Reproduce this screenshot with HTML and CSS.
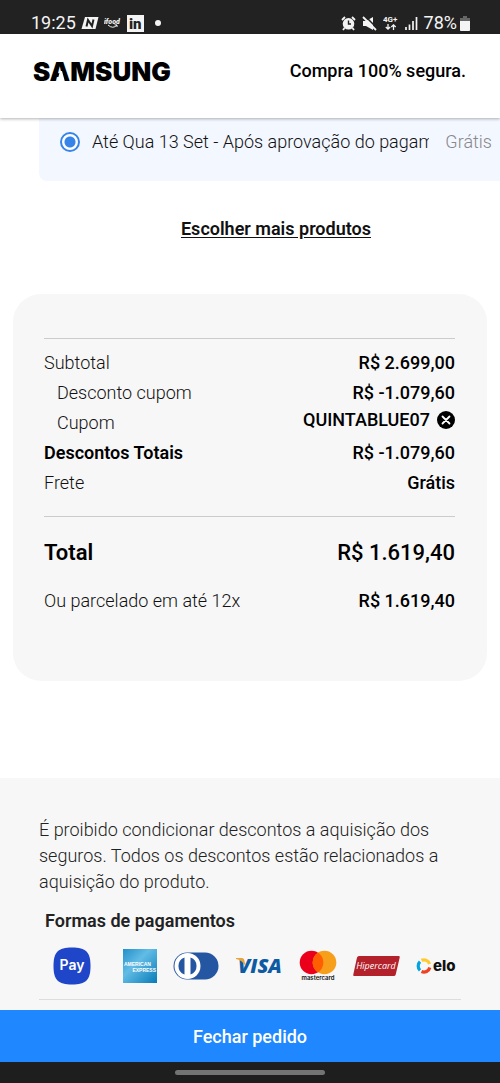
FILE: index.html
```html
<!DOCTYPE html>
<html lang="pt-BR">
<head>
<meta charset="utf-8">
<meta name="viewport" content="width=device-width, initial-scale=1">
<title>Samsung - Compra segura</title>
<link rel="stylesheet" href="styles.css">
</head>
<body>
<div class="status">
  <div class="status-group">
    <span class="clock">19:25</span>
    <svg width="18" height="14" viewBox="0 0 18 14" aria-hidden="true"><path d="M4 1h13.500l-3 12H.5z" fill="#f4f4f4"/><path d="M5.500 10.500 7 4l4 6 1.500-6.500" fill="none" stroke="#222" stroke-width="2"/></svg>
    <svg width="18" height="14" viewBox="0 0 18 14" aria-hidden="true"><text x="0" y="8" class="ifood">ifood</text><path d="M4 9q5 4.500 9 0M13 9l-2.500-.2M13 9v2" fill="none" stroke="#f4f4f4"/></svg>
    <svg width="17" height="17" viewBox="0 0 17 17" aria-hidden="true"><path d="M0 0h17v17H0z" fill="#f4f4f4"/><text x="2" y="14" class="linkedin">in</text></svg>
    <span class="dot"></span>
  </div>
  <div class="status-group status-right">
    <svg width="15" height="15" viewBox="0 0 15 15" aria-hidden="true"><path d="m1 4 3-3m10 3-3-3M3.500 12 2 14m9.500-2 1.500 2" stroke="#f4f4f4" stroke-width="1.800"/><circle cx="7.500" cy="7.800" r="5.800" fill="#f4f4f4"/><path d="M7.500 4.500V8H10" fill="none" stroke="#222" stroke-width="1.400"/></svg>
    <svg width="15" height="15" viewBox="0 0 15 15" aria-hidden="true"><path d="M1 5h3l7-4v13l-7-4H1z" fill="#f4f4f4"/><path d="m3 0 12 12" stroke="#222" stroke-width="1.500"/><path d="m1 1 13 13" stroke="#f4f4f4" stroke-width="1.800"/></svg>
    <svg width="16" height="16" viewBox="0 0 16 16" aria-hidden="true"><text x="0" y="7" class="network">4G+</text><path d="M5 9v5M2.800 12 5 14.200 7.200 12M10.500 15v-5M8.300 12l2.200-2.200 2.200 2.200" fill="none" stroke="#f4f4f4" stroke-width="1.300"/></svg>
    <svg width="13" height="13" viewBox="0 0 13 13" aria-hidden="true"><path d="M1 13v-3M4.500 13V7.500M8 13V4M11.500 13V0" stroke="#f4f4f4" stroke-width="1.700"/></svg>
    <span class="battery-level">78%</span>
    <svg width="10" height="15" viewBox="0 0 10 15" aria-hidden="true"><path d="M3 0h4v2h3v12q0 1-1 1H1q-1 0-1-1V2h3z" fill="#666"/><path d="M0 5h10v9q0 1-1 1H1q-1 0-1-1z" fill="#f4f4f4"/></svg>
  </div>
</div>

<header class="header">
  <svg class="brand" width="144" height="28" viewBox="0 0 144 28" role="img" aria-label="Samsung"><text x="0" y="24" class="brand-text">SAMSUNG</text><path d="M27 14h2l3 11h-8z" fill="#fff"/></svg>
  <span class="secure">Compra 100% segura.</span>
</header>

<main class="main">
  <label class="shipping">
    <input class="radio" type="radio" name="shipping" checked>
    <span class="shipping-name">Até Qua 13 Set - Após aprovação do pagamento</span>
    <span class="shipping-price">Grátis</span>
  </label>
  <a class="more" href="#produtos">Escolher mais produtos</a>

  <section class="summary">
    <dl class="rows">
      <div class="row"><dt>Subtotal</dt><dd>R$ 2.699,00</dd></div>
      <div class="row row-sub"><dt>Desconto cupom</dt><dd>R$ -1.079,60</dd></div>
      <div class="row row-sub"><dt>Cupom</dt><dd class="coupon">QUINTABLUE07
        <button class="remove" type="button" aria-label="Remover cupom"><svg width="18" height="18" viewBox="0 0 18 18" aria-hidden="true"><circle cx="9" cy="9" r="9"/><path d="m5.500 5.500 7 7m0-7-7 7" stroke="#fff" stroke-width="1.800" stroke-linecap="round"/></svg></button></dd></div>
      <div class="row row-strong"><dt>Descontos Totais</dt><dd>R$ -1.079,60</dd></div>
      <div class="row"><dt>Frete</dt><dd>Grátis</dd></div>
    </dl>
    <dl class="totals">
      <div class="row total"><dt>Total</dt><dd>R$ 1.619,40</dd></div>
      <div class="row"><dt>Ou parcelado em até 12x</dt><dd>R$ 1.619,40</dd></div>
    </dl>
  </section>
</main>

<footer class="footer">
  <p class="notice">É proibido condicionar descontos a aquisição dos seguros. Todos os descontos estão relacionados a aquisição do produto.</p>
  <h2 class="payments-title">Formas de pagamentos</h2>
  <div class="payments">
    <svg class="samsung-pay" width="38" height="38" viewBox="0 0 38 38" role="img" aria-label="Samsung Pay"><path d="M19 .5C33 .5 37.500 5 37.500 19S33 37.500 19 37.500.5 33 .5 19 5 .5 19 .5z" fill="#1f46c8"/><text x="19" y="23" text-anchor="middle" class="pay">Pay</text></svg>
    <svg width="34" height="34" viewBox="0 0 34 34" role="img" aria-label="American Express"><defs><linearGradient id="amex" x2="1" y2="1"><stop stop-color="#238fca"/><stop offset=".4" stop-color="#62bce5"/><stop offset="1" stop-color="#087bb8"/></linearGradient></defs><path d="M0 0h34v34H0z" fill="url(#amex)"/><text x="1" y="17" class="amex">AMERICAN</text><text x="33" y="23" text-anchor="end" class="amex">EXPRESS</text></svg>
    <svg width="46" height="28" viewBox="0 0 46 28" role="img" aria-label="Diners Club"><rect x=".5" y=".5" width="45" height="27" rx="13.500" fill="#2556a2"/><circle cx="14.500" cy="14" r="13" fill="#fff"/><path d="M11.500 5.500a9 9 0 0 0 0 17zM17.500 5.500a9 9 0 0 1 0 17z" fill="#2556a2"/></svg>
    <svg width="48" height="20" viewBox="0 0 48 20" role="img" aria-label="Visa"><text x="3" y="17" class="visa">VISA</text><path d="M1 2h6q2 0 2.500 3l1 5Q7 4 1 3z" fill="#e6a63c"/></svg>
    <svg width="38" height="32" viewBox="0 0 38 32" role="img" aria-label="Mastercard"><circle cx="12.500" cy="12.500" r="11.800" fill="#eb001b"/><circle cx="25.500" cy="12.500" r="11.800" fill="#f79e1b"/><path d="M19 2.600a11.800 11.800 0 0 1 0 19.800 11.800 11.800 0 0 1 0-19.800z" fill="#ff5f00"/><text x="19" y="30" text-anchor="middle" class="mastercard">mastercard</text></svg>
    <svg width="47" height="22" viewBox="0 0 47 22" role="img" aria-label="Hipercard"><path d="M6 1h40q1 0 .7 1.500l-4 17q-.3 1.500-2 1.500H1q-1 0-.7-1.500L4 2.500Q4.500 1 6 1z" fill="#b3212a"/><text x="23" y="14" text-anchor="middle" class="hiper">Hipercard</text></svg>
    <svg width="41" height="18" viewBox="0 0 41 18" role="img" aria-label="Elo"><g fill="none" stroke-width="3.200"><path d="M5.500 3.300A6 6 0 0 1 13.600 7" stroke="#fecb2f"/><path d="M4 13.300A6 6 0 0 1 4 4.700" stroke="#00a4e0"/><path d="M13.800 10.500a6 6 0 0 1-8.300 4" stroke="#ef4123"/></g><text x="17" y="14" class="elo">elo</text></svg>
  </div>
</footer>
<button class="checkout" type="button">Fechar pedido</button>
<div class="gesture"><span class="gesture-pill"></span></div>
</body>
</html>
```
FILE: styles.css
```css
* { box-sizing: border-box; }

body {
  margin: 0;
  min-height: 100vh;
  display: flex;
  flex-direction: column;
  background: #fff;
  color: #000;
  font: 400 18px/30px Roboto, "Noto Sans", sans-serif;
}

svg { display: block; flex: none; }
dl, dd, p, h2 { margin: 0; }

.status {
  display: flex;
  justify-content: space-between;
  padding: 12px 30px 0 31px;
  height: 34px;
  background: #222;
  color: #f4f4f4;
  font-size: 18px;
  line-height: 22px;
}
.status-group { display: flex; align-items: center; gap: 5px; }
.status-right { gap: 6px; }
.battery-level { margin-right: -3px; }
.dot { width: 6px; height: 6px; margin-left: 6px; border-radius: 50%; background: #f4f4f4; }
.ifood { font: italic 900 7px Roboto, sans-serif; fill: #f4f4f4; }
.linkedin { font: 900 15px Roboto, sans-serif; fill: #222; }
.network { font: 700 8px Roboto, sans-serif; fill: #f4f4f4; }

.header {
  position: relative;
  display: flex;
  align-items: center;
  justify-content: space-between;
  height: 84px;
  padding: 0 34px 10px 33px;
  background: #fff;
  box-shadow: 0 1px 3px rgba(0, 0, 0, .3);
}
.brand-text { font: 900 26px Inter, sans-serif; }
.secure { font-weight: 500; }

.main { display: flex; flex-direction: column; }
.shipping {
  display: flex;
  align-items: center;
  height: 63px;
  margin-left: 39px;
  padding: 0 8px 15px 21px;
  border-bottom-left-radius: 8px;
  background: #f3f7ff;
  color: #111;
  font-weight: 300;
}
.radio {
  appearance: none;
  flex: none;
  width: 20px;
  height: 20px;
  margin: 0 12px 0 0;
  border: 2px solid #3784e8;
  border-radius: 50%;
  background: radial-gradient(circle, #3784e8 5px, #fff 6px);
}
.shipping-name {
  flex: 1;
  min-width: 0;
  overflow: hidden;
  white-space: nowrap;
}
.shipping-price { margin-left: 16px; color: #888; }
.more {
  align-self: center;
  margin: 33px 0 0 52px;
  color: #111;
  font-weight: 600;
  text-underline-offset: 2px;
}

.summary {
  margin: 50px 13px 97px;
  padding: 44px 32px 65px 31px;
  border-radius: 28px;
  background: #f7f7f7;
}
.rows { padding: 9px 0 18px; border-top: 1px solid #ccc; }
.totals { border-top: 1px solid #ccc; padding-top: 21px; }
.row { display: flex; justify-content: space-between; font-weight: 500; }
.row dt { color: #111; font-weight: 300; }
.row-sub { padding-left: 13px; }
.coupon { display: flex; align-items: center; gap: 7px; padding-bottom: 6px; height: 30px; }
.remove { padding: 0; border: 0; background: none; }
.row-strong dt, .total dt { color: #000; font-weight: 600; }
.total { margin-bottom: 18px; font-size: 22px; }

.footer {
  flex: 1;
  padding: 39px 39px 9px;
  background: #f7f7f7;
  color: #222;
}
.notice { font-weight: 300; line-height: 26px; }
.payments-title { margin: 11px 6px; font-size: 18px; font-weight: 600; line-height: 30px; }
.payments {
  display: flex;
  align-items: center;
  gap: 16px;
  padding: 0 8px 14px 14px;
  border-bottom: 1px solid #ddd;
}
.samsung-pay { margin-right: 16px; }
.pay { font: 600 14px Inter, sans-serif; fill: #fff; }
.amex { font: 700 5px "Liberation Sans", sans-serif; fill: #fff; }
.visa { font: italic 800 20px "Open Sans", sans-serif; fill: #0e5ba3; }
.mastercard { font: 600 6px Inter, sans-serif; fill: #111; }
.hiper { font: italic 500 9px "Open Sans", sans-serif; fill: #fff; }
.elo { font: 800 15px Inter, sans-serif; fill: #111; }

.checkout {
  height: 52px;
  border: 0;
  background: #1f87ff;
  color: #fff;
  font: 500 18px Roboto, sans-serif;
}
.gesture {
  display: flex;
  align-items: center;
  justify-content: center;
  height: 21px;
  background: #1e1e1e;
}
.gesture-pill { width: 150px; height: 5px; border-radius: 3px; background: #737373; }
```
